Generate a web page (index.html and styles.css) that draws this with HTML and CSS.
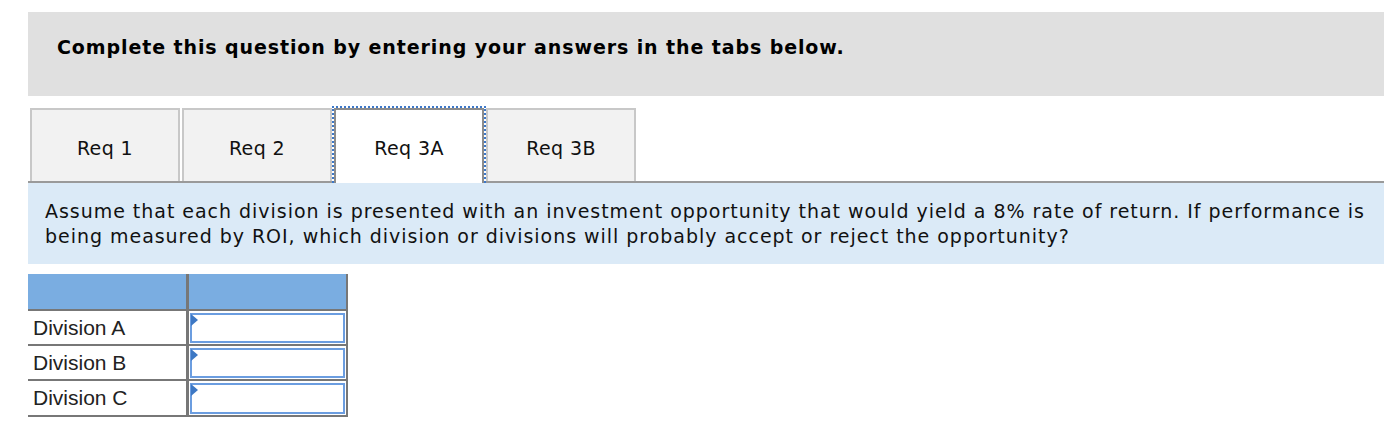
FILE: index.html
```html
<!DOCTYPE html>
<html>
<head>
<meta charset="utf-8">
<link rel="stylesheet" href="styles.css">
</head>
<body>
<div class="page">
  <div class="banner">
    <h1 class="banner-title">Complete this question by entering your answers in the tabs below.</h1>
  </div>
  <div class="tabs">
    <div class="tab">Req 1</div>
    <div class="tab">Req 2</div>
    <div class="tab tab-active">Req 3A</div>
    <div class="tab">Req 3B</div>
  </div>
  <div class="prompt">Assume that each division is presented with an investment opportunity that would yield a 8% rate of return. If performance is being measured by ROI, which division or divisions will probably accept or reject the opportunity?</div>
  <table class="grid">
    <tr class="head-row">
      <th class="c1"></th>
      <th class="c2"></th>
    </tr>
    <tr>
      <td class="c1 label">Division A</td>
      <td class="c2"><div class="input"><span class="flag"></span></div></td>
    </tr>
    <tr>
      <td class="c1 label">Division B</td>
      <td class="c2"><div class="input"><span class="flag"></span></div></td>
    </tr>
    <tr class="last-row">
      <td class="c1 label">Division C</td>
      <td class="c2"><div class="input"><span class="flag"></span></div></td>
    </tr>
  </table>
</div>
</body>
</html>
```
FILE: styles.css
```css
html, body {
  margin: 0;
  padding: 0;
  background: #ffffff;
}
.page {
  padding-top: 12px;
  font-family: "DejaVu Sans", Verdana, sans-serif;
  color: #111;
}
.banner {
  margin-left: 28px;
  height: 84px;
  background: #e0e0e0;
  box-sizing: border-box;
  padding: 24px 0 0 29px;
}
.banner-title {
  margin: 0;
  font-size: 19px;
  line-height: 22px;
  letter-spacing: 0.9px;
  font-weight: bold;
  color: #000;
}
.tabs {
  margin-top: 12px;
  margin-left: 28px;
  padding-left: 2px;
  display: flex;
  gap: 2px;
  border-bottom: 2px solid #9a9a9a;
}
.tab {
  width: 150px;
  height: 73px;
  box-sizing: border-box;
  border: 2px solid #c8c8c8;
  border-bottom: none;
  background: #f2f2f2;
  display: flex;
  align-items: center;
  justify-content: center;
  padding-top: 4px;
  font-size: 19px;
  letter-spacing: 0.4px;
  color: #111;
}
.tab-active {
  position: relative;
  background: #ffffff;
  border-color: #8c8c8c;
  height: 75px;
  margin-bottom: -2px;
  padding-top: 2px;
}
.tab-active::after {
  content: "";
  position: absolute;
  left: -4px;
  right: -4px;
  top: -4px;
  bottom: 0;
  border: 2px dotted #3d78c8;
  border-bottom: none;
}
.prompt {
  margin-left: 28px;
  background: #dbeaf7;
  padding: 16px 7px 15px 17px;
  font-size: 19px;
  line-height: 25px;
  letter-spacing: 0.97px;
  color: #111;
}
.grid {
  margin-top: 10px;
  margin-left: 28px;
  border-collapse: collapse;
  border-spacing: 0;
}
.grid th, .grid td {
  padding: 0;
}
.head-row th {
  background: #7aade1;
  height: 35px;
  border-bottom: 2px solid #777;
}
.grid .c1 {
  width: 158px;
  border-right: 3px solid #777;
}
.grid .c2 {
  width: 157px;
  border-right: 2px solid #777;
}
.grid td {
  height: 33px;
  border-bottom: 2px solid #777;
}
.grid .last-row td {
  height: 34px;
}
.label {
  font-family: "Liberation Sans", Arial, sans-serif;
  font-size: 21px;
  color: #222;
  padding-left: 5px !important;
  box-sizing: border-box;
}
.input {
  position: relative;
  height: 30px;
  margin: 1px;
  border: 2px solid #6b9de0;
  box-sizing: border-box;
  background: #fff;
}
.last-row .input {
  height: 31px;
}
.flag {
  position: absolute;
  left: -1px;
  top: -1px;
  width: 0;
  height: 0;
  border-top: 6px solid transparent;
  border-bottom: 6px solid transparent;
  border-left: 7px solid #3d78c4;
}
```
